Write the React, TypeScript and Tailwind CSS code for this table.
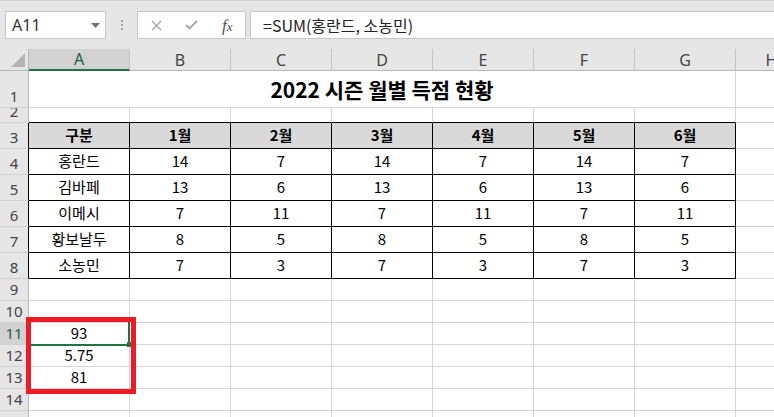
import React from "react";

const COLS = ["A", "B", "C", "D", "E", "F", "G"];
const DATA: (string | number)[][] = [
  ["구분", "1월", "2월", "3월", "4월", "5월", "6월"],
  ["홍란드", 14, 7, 14, 7, 14, 7],
  ["김바페", 13, 6, 13, 6, 13, 6],
  ["이메시", 7, 11, 7, 11, 7, 11],
  ["황보날두", 8, 5, 8, 5, 8, 5],
  ["소농민", 7, 3, 7, 3, 7, 3],
];

const HDR_FONT = "font-['Noto_Sans','Open_Sans',sans-serif]";
const CELL_FONT = "font-['Noto_Sans_CJK_KR','Noto_Sans',sans-serif]";

function RowHeader({ n, h, table, selected }: { n: number; h: string; table?: boolean; selected?: boolean }) {
  return (
    <div
      className={`${h} w-[29px] shrink-0 overflow-hidden flex items-end justify-center pb-[3px] border-b border-[#d0d0d0] ${
        table ? "border-r border-r-black" : "border-r border-r-[#b8b8b8]"
      } ${selected ? "bg-[#d2d2d2] text-[#1f5f3c]" : "bg-[#e6e6e6] text-[#444444]"} text-[15px] leading-[16px] ${HDR_FONT}`}
    >
      {n}
    </div>
  );
}

function GridRow({ n, h, children, selected }: { n: number; h: string; children?: React.ReactNode; selected?: boolean }) {
  return (
    <div className="flex">
      <RowHeader n={n} h={h} selected={selected} />
      {children ??
        COLS.map((c) => (
          <div key={c} className={`${h} w-[101px] shrink-0 border-r border-b border-[#d4d4d4]`} />
        ))}
      <div className={`${h} w-[72px] shrink-0 border-r border-b border-[#d4d4d4]`} />
    </div>
  );
}

export default function App() {
  return (
    <div className={`relative w-[774px] h-[417px] overflow-hidden bg-white ${HDR_FONT}`}>
      {/* toolbar */}
      <div className="h-[49px] bg-[#e6e6e6] border-t border-[#d0d0d0] flex items-start pt-[10px] w-[1100px]">
        <div className="ml-[5px] w-[101px] h-[28px] bg-white border border-[#c6c6c6] flex items-center pl-[6px] pr-[5px] justify-between">
          <span className="text-[16px] text-[#333333] leading-none">A11</span>
          <svg width="9" height="5" viewBox="0 0 9 5">
            <polygon points="0,0 9,0 4.5,5" fill="#707070" />
          </svg>
        </div>
        <div className="w-[31px] h-[28px] flex flex-col items-center justify-center gap-[2px]">
          <span className="w-[2px] h-[2px] bg-[#a0a0a0]" />
          <span className="w-[2px] h-[2px] bg-[#a0a0a0]" />
          <span className="w-[2px] h-[2px] bg-[#a0a0a0]" />
        </div>
        <div className="w-[109px] h-[28px] bg-white border border-[#c6c6c6] flex items-center">
          <div className="w-[36px] flex justify-center pl-[1px]">
            <svg width="11" height="11" viewBox="0 0 11 11">
              <path d="M1 1L10 10M10 1L1 10" stroke="#a6a6a6" strokeWidth="1.4" />
            </svg>
          </div>
          <div className="w-[36px] flex justify-center">
            <svg width="13" height="10" viewBox="0 0 13 10">
              <path d="M1 5L4.5 8.5L12 1" stroke="#a6a6a6" strokeWidth="1.8" fill="none" />
            </svg>
          </div>
          <div className="w-[36px] flex justify-center">
            <span className="font-['Liberation_Serif',serif] italic text-[17px] text-[#555555] leading-none">
              f<span className="text-[13px]">x</span>
            </span>
          </div>
        </div>
        <div className="ml-[4px] w-[600px] h-[28px] bg-white border border-[#c6c6c6] flex items-center pl-[12px]">
          <span className={`text-[16px] text-[#222222] leading-none ${CELL_FONT}`}>=SUM(홍란드, 소농민)</span>
        </div>
      </div>

      {/* column header */}
      <div className="flex h-[22px]">
        <div className="w-[29px] h-[22px] shrink-0 bg-[#e6e6e6] border-r border-b border-[#b8b8b8] relative">
          <svg className="absolute left-0 top-0" width="28" height="21" viewBox="0 0 28 21">
            <polygon points="25,4 25,18 11,18" fill="#b4b4b4" />
          </svg>
        </div>
        {COLS.map((c) => (
          <div
            key={c}
            className={`w-[101px] h-[22px] shrink-0 flex items-center justify-center border-r border-r-[#c4c4c4] text-[16px] ${
              c === "A"
                ? "bg-[#d2d2d2] border-b-2 border-b-[#217346] text-[#1f5f3c]"
                : "bg-[#e6e6e6] border-b border-b-[#b8b8b8] text-[#444444]"
            }`}
          >
            {c}
          </div>
        ))}
        <div className="w-[72px] h-[22px] shrink-0 flex items-center justify-center bg-[#e6e6e6] border-r border-b border-[#b8b8b8] text-[16px] text-[#444444]">
          H
        </div>
      </div>

      {/* row 1: title */}
      <GridRow n={1} h="h-[37px]">
        <div className={`h-[37px] w-[707px] shrink-0 border-r border-b border-[#d4d4d4] flex items-center justify-center pt-[1px] ${CELL_FONT}`}>
          <span className="text-[21px] font-bold text-black">2022 시즌 월별 득점 현황</span>
        </div>
      </GridRow>

      {/* row 2 */}
      <GridRow n={2} h="h-[15px]">
        {COLS.map((c) => (
          <div key={c} className="h-[15px] w-[101px] shrink-0 border-r border-r-[#d4d4d4] border-b border-b-black" />
        ))}
      </GridRow>

      {/* table rows 3-8 */}
      {DATA.map((row, i) => (
        <div key={i} className="flex">
          <RowHeader n={i + 3} h="h-[26px]" table />
          {row.map((v, j) => (
            <div
              key={j}
              className={`h-[26px] w-[101px] shrink-0 border-r border-b border-black flex items-center justify-center text-[15px] text-black ${CELL_FONT} ${
                i === 0 ? "bg-[#d9d9d9] font-bold" : ""
              }`}
            >
              {v}
            </div>
          ))}
          <div className="h-[26px] w-[72px] shrink-0 border-r border-b border-[#d4d4d4]" />
        </div>
      ))}

      {/* rows 9-15 */}
      {[9, 10, 11, 12, 13, 14, 15].map((n) => {
        const val = n === 11 ? "93" : n === 12 ? "5.75" : n === 13 ? "81" : "";
        return (
          <GridRow key={n} n={n} h="h-[22px]" selected={n === 11}>
            {COLS.map((c) => (
              <div
                key={c}
                className={`h-[22px] w-[101px] shrink-0 border-r border-b border-[#d4d4d4] flex items-center justify-center text-[15px] text-black ${CELL_FONT}`}
              >
                {c === "A" ? val : ""}
              </div>
            ))}
          </GridRow>
        );
      })}

      {/* selection of A11 */}
      <div className="absolute left-[29px] top-[322px] w-[101px] h-[24px] border-r-2 border-b-2 border-[#217346]" />
      <div className="absolute left-[127px] top-[342px] w-[4px] h-[5px] bg-[#217346]" />
      {/* red highlight box */}
      <div className="absolute left-[26px] top-[317px] w-[110px] h-[77px] border-[5px] border-[#ed1c24]" />
    </div>
  );
}
